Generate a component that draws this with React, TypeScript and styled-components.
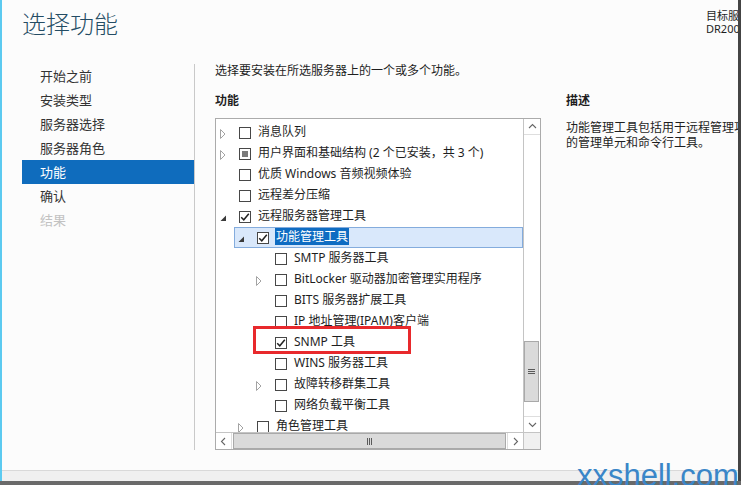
import styled, { createGlobalStyle } from "styled-components";

const GlobalStyle = createGlobalStyle`
  html, body {
    margin: 0;
    padding: 0;
    background: #fcfcfc;
  }
  body {
    font-family: "Noto Sans", "Noto Sans CJK SC", sans-serif;
    color: #1e1e1e;
  }
`;

const Page = styled.div`
  position: relative;
  width: 741px;
  height: 485px;
  overflow: hidden;
  background: linear-gradient(#3a3a3a, #6a6a6a);
`;

const Window = styled.div`
  height: 481px;
  box-sizing: border-box;
  border-left: 2px solid #5ccaf0;
  border-right: 3px solid #444;
  background: #fcfcfc;
  display: flex;
  flex-direction: column;
  overflow: hidden;
`;

const Header = styled.div`
  height: 64px;
  flex-shrink: 0;
  display: flex;
  padding-left: 20px;
`;

const Title = styled.h1`
  margin: 9px 0 0;
  font-size: 24px;
  font-weight: 300;
  line-height: 30px;
  color: #244c64;
  letter-spacing: 0;
`;

const ServerInfo = styled.div`
  margin-left: auto;
  width: 32px;
  padding-top: 9px;
  font-size: 11px;
  line-height: 13px;
  white-space: nowrap;
  color: #1e1e1e;
`;

const Body = styled.div`
  height: 386px;
  flex-shrink: 0;
  display: flex;
  padding-left: 20px;
`;

const Nav = styled.nav`
  flex: 0 0 172px;
  border-right: 1px solid #c9c9c9;
  display: flex;
  flex-direction: column;
`;

const NavItem = styled.div<{ $active?: boolean; $disabled?: boolean }>`
  height: 24px;
  line-height: 24px;
  padding-left: 18px;
  font-size: 13px;
  color: ${p => (p.$active ? "#fff" : p.$disabled ? "#c2c2c2" : "#333")};
  background: ${p => (p.$active ? "#0f6cbd" : "transparent")};
`;

const Content = styled.div`
  flex-shrink: 0;
  padding-left: 20px;
  display: flex;
  flex-direction: column;
`;

const Intro = styled.p`
  margin: 0;
  font-size: 12px;
  line-height: 14px;
  white-space: nowrap;
`;

const Columns = styled.div`
  margin-top: 15px;
  display: flex;
  gap: 25px;
`;

const Column = styled.div`
  flex-shrink: 0;
  display: flex;
  flex-direction: column;
`;

const Heading = styled.h2<{ $gap: number }>`
  margin: 0 0 ${p => p.$gap}px;
  font-size: 12px;
  font-weight: 700;
  line-height: 16px;
`;

const Description = styled.p`
  margin: 0;
  width: 194px;
  font-size: 12px;
  line-height: 15px;
`;

const TreeBox = styled.div`
  width: 326px;
  height: 332px;
  box-sizing: border-box;
  border: 1px solid #ababab;
  background: #fff;
  display: grid;
  grid-template-columns: 1fr 17px;
  grid-template-rows: 1fr 17px;
`;

const List = styled.div`
  overflow: hidden;
  padding-top: 3px;
`;

const Row = styled.div<{ $level: number; $selected?: boolean }>`
  position: relative;
  height: 21px;
  margin-left: ${p => p.$level * 18}px;
  padding-left: 4px;
  display: flex;
  align-items: center;
  font-size: 12px;
  white-space: nowrap;
  background: ${p => (p.$selected ? "#d9e8fb" : "transparent")};
  box-shadow: ${p => (p.$selected ? "inset 0 0 0 1px #84acdd" : "none")};
`;

const Expander = styled.span`
  flex: 0 0 19px;
  height: 21px;
  display: flex;
  align-items: center;
`;

const Check = styled.span<{ $mixed?: boolean }>`
  flex: 0 0 12px;
  height: 12px;
  box-sizing: border-box;
  border: 1px solid #474747;
  background: #fff;
  display: flex;
  align-items: center;
  justify-content: center;

  &::after {
    content: "";
    display: ${p => (p.$mixed ? "block" : "none")};
    width: 6px;
    height: 6px;
    background: #7b7b7b;
  }
`;

const Label = styled.span`
  margin-left: 7px;
  padding-bottom: 2px;
  line-height: 15px;
`;

const Selection = styled.span`
  background: #0f6cc2;
  color: #fff;
  padding: 0 1px;
  margin-left: -1px;
`;

const Marker = styled.span`
  position: absolute;
  left: 1px;
  top: -6px;
  width: 158px;
  height: 28px;
  box-sizing: border-box;
  border: 3px solid #e8292c;
`;

const VScroll = styled.div`
  border-left: 1px solid #c4c4c4;
  display: flex;
  flex-direction: column;
`;

const HScroll = styled.div`
  border-top: 1px solid #c4c4c4;
  display: flex;
`;

const Corner = styled.div`
  background: #f0f0f0;
  border-top: 1px solid #c4c4c4;
  border-left: 1px solid #c4c4c4;
`;

const ArrowButton = styled.div<{ $side: "top" | "bottom" | "left" | "right" }>`
  flex: 0 0 16px;
  box-sizing: border-box;
  display: flex;
  align-items: center;
  justify-content: center;
  background: #fff;
  ${p => `border-${p.$side === "top" ? "bottom" : p.$side === "bottom" ? "top" : p.$side === "left" ? "right" : "left"}: 1px solid #dedede;`}
`;

const VTrack = styled.div`
  flex: 1;
  display: flex;
  flex-direction: column;
  justify-content: flex-end;
  padding-bottom: 14px;
`;

const HTrack = styled.div`
  flex: 1;
  display: flex;
  padding: 0 1px 0 1px;
`;

const Thumb = styled.div<{ $vertical?: boolean }>`
  box-sizing: border-box;
  background: #dadada;
  border: 1px solid #a9a9a9;
  display: flex;
  align-items: center;
  justify-content: center;
  ${p => (p.$vertical ? "height: 61px; margin: 0 1px 0 0;" : "flex: 1;")}
`;

const Footer = styled.div`
  margin-top: auto;
  height: 11px;
  flex-shrink: 0;
  box-sizing: border-box;
  border-top: 1px solid #d9d9d9;
  background: #f0f0f0;
`;

const Watermark = styled.div`
  position: absolute;
  left: 577px;
  top: 460px;
  font-family: "Liberation Sans", Arial, sans-serif;
  font-size: 31px;
  line-height: 1;
  color: #3a86c8;
  white-space: nowrap;
`;

type Node = {
  label: string;
  level: number;
  expander?: "open" | "closed";
  state?: "on" | "mixed";
  selected?: boolean;
  marked?: boolean;
};

const nodes: Node[] = [
  { label: "消息队列", level: 0, expander: "closed" },
  { label: "用户界面和基础结构 (2 个已安装，共 3 个)", level: 0, expander: "closed", state: "mixed" },
  { label: "优质 Windows 音频视频体验", level: 0 },
  { label: "远程差分压缩", level: 0 },
  { label: "远程服务器管理工具", level: 0, expander: "open", state: "on" },
  { label: "功能管理工具", level: 1, expander: "open", state: "on", selected: true },
  { label: "SMTP 服务器工具", level: 2 },
  { label: "BitLocker 驱动器加密管理实用程序", level: 2, expander: "closed" },
  { label: "BITS 服务器扩展工具", level: 2 },
  { label: "IP 地址管理(IPAM)客户端", level: 2 },
  { label: "SNMP 工具", level: 2, state: "on", marked: true },
  { label: "WINS 服务器工具", level: 2 },
  { label: "故障转移群集工具", level: 2, expander: "closed" },
  { label: "网络负载平衡工具", level: 2 },
  { label: "角色管理工具", level: 1, expander: "closed" }
];

const navs = [
  { id: 1, name: "开始之前" },
  { id: 2, name: "安装类型" },
  { id: 3, name: "服务器选择" },
  { id: 4, name: "服务器角色" },
  { id: 5, name: "功能", active: true },
  { id: 6, name: "确认" },
  { id: 7, name: "结果", disabled: true }
];

const Triangle = ({ open }: { open: boolean }) =>
  open ? (
    <svg width="7" height="7" viewBox="0 0 7 7" style={{ marginTop: 3 }}>
      <polygon points="6,0.5 6,6 0.5,6" fill="#3a3a3a" />
    </svg>
  ) : (
    <svg width="7" height="10" viewBox="0 0 7 10" style={{ marginTop: 2 }}>
      <polygon points="0.5,0.5 5,5 0.5,9.5" fill="none" stroke="#a3a3a3" />
    </svg>
  );

const Tick = () => (
  <svg width="10" height="10" viewBox="0 0 10 10">
    <path d="M1.2 5.2 L3.8 7.8 L8.8 1.8" fill="none" stroke="#222" strokeWidth="1.5" />
  </svg>
);

const Chevron = ({ dir }: { dir: "up" | "down" | "left" | "right" }) => {
  const d = {
    up: "M1 6 L4.5 2.5 L8 6",
    down: "M1 3 L4.5 6.5 L8 3",
    left: "M6 1 L2.5 4.5 L6 8",
    right: "M3 1 L6.5 4.5 L3 8"
  }[dir];
  return (
    <svg width="9" height="9" viewBox="0 0 9 9">
      <path d={d} fill="none" stroke="#666" strokeWidth="1.1" />
    </svg>
  );
};

const Grip = ({ vertical }: { vertical?: boolean }) =>
  vertical ? (
    <svg width="7" height="7" viewBox="0 0 7 7">
      <path d="M0 1.5 H7 M0 3.5 H7 M0 5.5 H7" stroke="#5a5a5a" strokeWidth="1" />
    </svg>
  ) : (
    <svg width="7" height="7" viewBox="0 0 7 7">
      <path d="M1.5 0 V7 M3.5 0 V7 M5.5 0 V7" stroke="#5a5a5a" strokeWidth="1" />
    </svg>
  );

const App = () => {
  return (
    <Page>
      <GlobalStyle />
      <Window>
        <Header>
          <Title>选择功能</Title>
          <ServerInfo>
            <div>目标服务器</div>
            <div>DR2008</div>
          </ServerInfo>
        </Header>

        <Body>
          <Nav>
            {navs.map(item => (
              <NavItem key={item.id} $active={item.active} $disabled={item.disabled}>
                {item.name}
              </NavItem>
            ))}
          </Nav>

          <Content>
            <Intro>选择要安装在所选服务器上的一个或多个功能。</Intro>
            <Columns>
              <Column>
                <Heading $gap={9}>功能</Heading>
                <TreeBox>
                  <List>
                    {nodes.map(node => (
                      <Row key={node.label} $level={node.level} $selected={node.selected}>
                        <Expander>
                          {node.expander && <Triangle open={node.expander === "open"} />}
                        </Expander>
                        <Check $mixed={node.state === "mixed"}>
                          {node.state === "on" && <Tick />}
                        </Check>
                        <Label>
                          {node.selected ? <Selection>{node.label}</Selection> : node.label}
                        </Label>
                        {node.marked && <Marker />}
                      </Row>
                    ))}
                  </List>
                  <VScroll>
                    <ArrowButton $side="top">
                      <Chevron dir="up" />
                    </ArrowButton>
                    <VTrack>
                      <Thumb $vertical>
                        <Grip vertical />
                      </Thumb>
                    </VTrack>
                    <ArrowButton $side="bottom">
                      <Chevron dir="down" />
                    </ArrowButton>
                  </VScroll>
                  <HScroll>
                    <ArrowButton $side="left">
                      <Chevron dir="left" />
                    </ArrowButton>
                    <HTrack>
                      <Thumb>
                        <Grip />
                      </Thumb>
                    </HTrack>
                    <ArrowButton $side="right">
                      <Chevron dir="right" />
                    </ArrowButton>
                  </HScroll>
                  <Corner />
                </TreeBox>
              </Column>

              <Column>
                <Heading $gap={11}>描述</Heading>
                <Description>功能管理工具包括用于远程管理功能的管理单元和命令行工具。</Description>
              </Column>
            </Columns>
          </Content>
        </Body>

        <Footer />
      </Window>
      <Watermark>xxshell.com</Watermark>
    </Page>
  );
};

export default App;
